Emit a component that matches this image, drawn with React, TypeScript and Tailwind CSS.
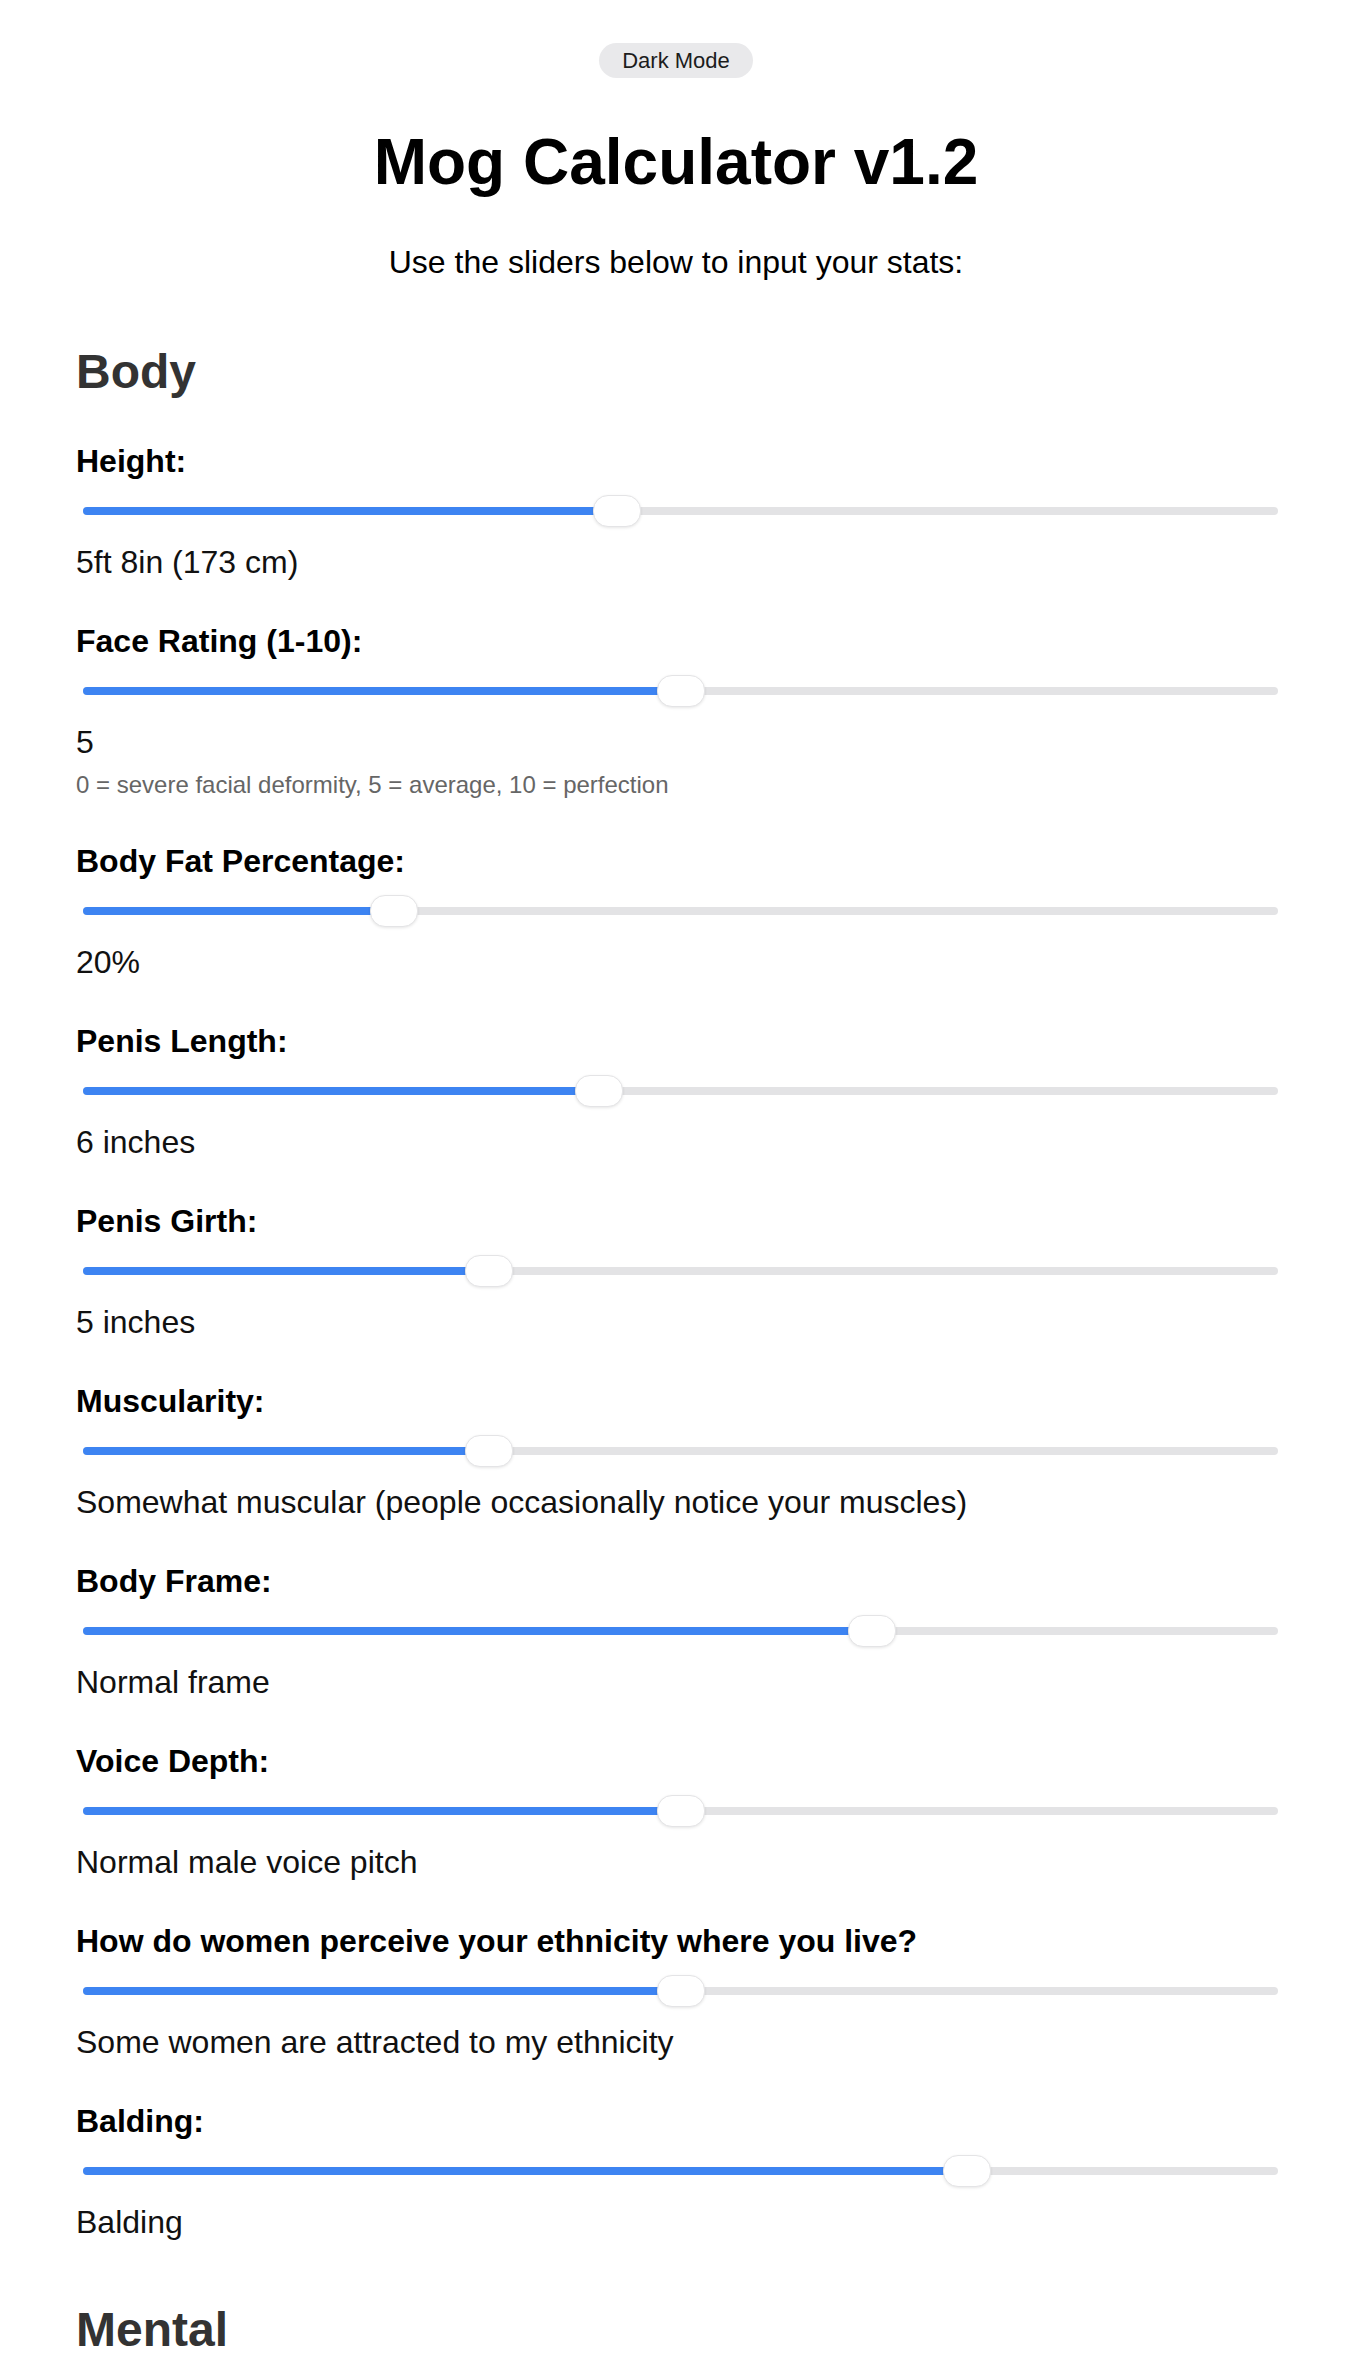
import React from "react";

type Stat = {
  label: string;
  value: string;
  fraction: number;
  note?: string;
};

const bodyStats: Stat[] = [
  { label: "Height:", value: "5ft 8in (173 cm)", fraction: 0.4446 },
  {
    label: "Face Rating (1-10):",
    value: "5",
    fraction: 0.5,
    note: "0 = severe facial deformity, 5 = average, 10 = perfection",
  },
  { label: "Body Fat Percentage:", value: "20%", fraction: 0.25 },
  { label: "Penis Length:", value: "6 inches", fraction: 3 / 7 },
  { label: "Penis Girth:", value: "5 inches", fraction: 1 / 3 },
  {
    label: "Muscularity:",
    value: "Somewhat muscular (people occasionally notice your muscles)",
    fraction: 1 / 3,
  },
  { label: "Body Frame:", value: "Normal frame", fraction: 2 / 3 },
  { label: "Voice Depth:", value: "Normal male voice pitch", fraction: 0.5 },
  {
    label: "How do women perceive your ethnicity where you live?",
    value: "Some women are attracted to my ethnicity",
    fraction: 0.5,
  },
  { label: "Balding:", value: "Balding", fraction: 0.75 },
];

function Slider({ fraction }: { fraction: number }) {
  // thumb centre travels from half a thumb in from each end of the track
  const pos = `calc(24px + ${fraction} * (100% - 48px))`;
  return (
    <div className="relative ml-[7px] mr-[-2px] mt-[15px] flex h-8 items-center">
      <div className="h-2 w-full overflow-hidden rounded-full bg-[#e3e3e5]">
        <div className="h-full bg-[#3d84f2]" style={{ width: pos }} />
      </div>
      <div
        className="absolute top-0 h-8 w-12 -translate-x-1/2 rounded-[15px] border border-[#e4e4e6] bg-white shadow-[0_1px_3px_rgba(0,0,0,0.10)]"
        style={{ left: pos }}
      />
    </div>
  );
}

function StatRow({ stat }: { stat: Stat }) {
  return (
    <div className="flex flex-col">
      <label className="block text-[32px] font-bold leading-[37px] text-black">
        {stat.label}
      </label>
      <Slider fraction={stat.fraction} />
      <div className="mt-[17px] text-[32px] leading-[37px] text-[#111]">
        {stat.value}
      </div>
      {stat.note && (
        <div className="mt-2 text-[24px] leading-[32px] text-[#666]">
          {stat.note}
        </div>
      )}
    </div>
  );
}

export default function App() {
  return (
    <div className="min-h-screen bg-white font-['Liberation_Sans',Arial,Helvetica,sans-serif] text-black">
      <div className="mx-auto max-w-[1200px] pt-[43px]">
        <div className="flex justify-center">
          <button className="rounded-full bg-[#e9e9eb] px-[23px] py-[5px] text-[22px] leading-[25px] text-[#1c1c1c]">
            Dark Mode
          </button>
        </div>

        <h1 className="mt-[47px] text-center text-[64px] font-bold leading-[74px]">
          Mog Calculator v1.2
        </h1>
        <p className="mt-[45px] text-center text-[32px] leading-[37px]">
          Use the sliders below to input your stats:
        </p>

        <section className="mt-[63px]">
          <h2 className="text-[48px] font-bold leading-[55px] text-[#333]">
            Body
          </h2>
          <div className="mt-[44px] flex flex-col gap-[42px]">
            {bodyStats.map((s) => (
              <StatRow key={s.label} stat={s} />
            ))}
          </div>
        </section>

        <section className="mt-[61px]">
          <h2 className="text-[48px] font-bold leading-[55px] text-[#333]">
            Mental
          </h2>
        </section>
      </div>
    </div>
  );
}
